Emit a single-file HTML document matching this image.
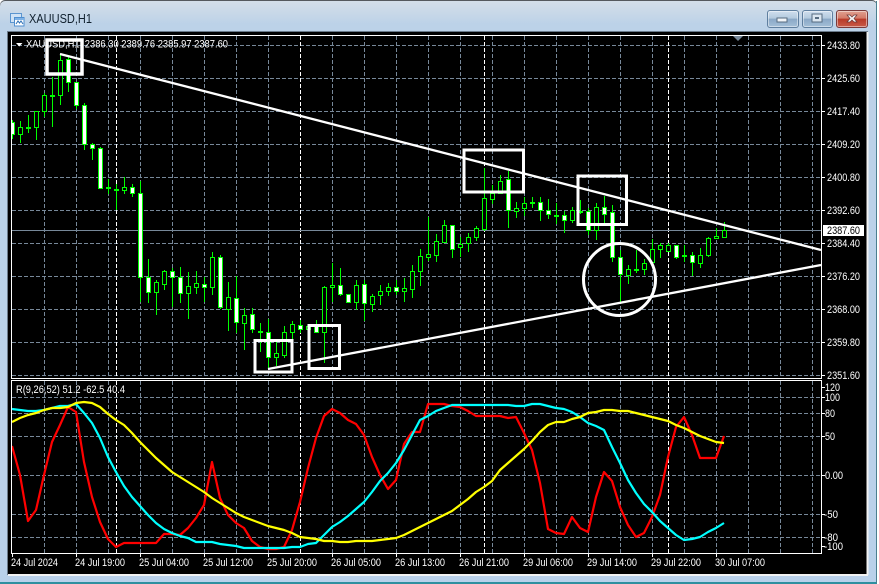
<!DOCTYPE html>
<html><head><meta charset="utf-8"><title>XAUUSD,H1</title>
<style>
html,body{margin:0;padding:0;width:879px;height:584px;overflow:hidden;background:#fff}
#win{position:absolute;left:0;top:0;width:877px;height:583px;background:linear-gradient(180deg,#d5dfe9 0,#bcd2e8 24px,#b9d1ea 100%);border-radius:5px 5px 0 0;box-shadow:inset 0 1px 0 #55595e}
#b1{position:absolute;left:0;top:582px;width:877px;height:2px;background:#2f8f9f}
#r1{position:absolute;left:876px;top:1px;width:1px;height:582px;background:#4a7f90}
.btn{position:absolute;top:10px;height:16px;border:1px solid #5f7f9f;border-radius:3px;box-shadow:inset 0 0 0 1px rgba(255,255,255,.45);background:linear-gradient(180deg,#cfdeee 0,#b4cade 45%,#8aa8c6 50%,#a4bfd8 100%)}
svg{position:absolute;left:0;top:0}
svg text{font-family:"Liberation Sans",sans-serif;font-size:11px;fill:#fff}
</style></head><body>
<div id="win"></div><div id="b1"></div><div id="r1"></div>
<div class="btn" style="left:767px;width:30px"></div>
<div class="btn" style="left:802px;width:29px"></div>
<div class="btn" style="left:836px;width:30px;border-color:#7a3a3a;background:linear-gradient(180deg,#e0a090 0,#d47a68 45%,#b83a28 50%,#c85a48 100%)"></div>
<svg width="879" height="584" viewBox="0 0 879 584" xmlns="http://www.w3.org/2000/svg">
<rect x="777" y="18" width="10" height="4" fill="#f2f5f8" stroke="#566b80" stroke-width="1"/>
<rect x="812" y="14" width="10" height="8" fill="#dbe6f0" stroke="#566b80" stroke-width="1"/><rect x="815" y="17" width="4" height="2" fill="#566b80"/>
<path d="M847 15l3 0 2 2 2-2 3 0-3 3.500 3 3.500-3 0-2-2-2 2-3 0 3-3.500z" fill="#f4f4f4" stroke="#6b3a3a" stroke-width=".7"/>
<rect x="10.500" y="13.500" width="11" height="9" fill="#cfe2f5" stroke="#5b95cf"/>
<rect x="14.500" y="17.500" width="9.500" height="8.500" fill="#fff" stroke="#4f8fd0"/>
<rect x="15" y="18" width="9" height="2" fill="#7eb2e6"/>
<path d="M16 24l2-3 1.500 2 1.500-2 2 3" fill="none" stroke="#2c6fb5" stroke-width="1"/>
<text x="29" y="23" textLength="63" lengthAdjust="spacingAndGlyphs" style="font-size:12.500px;fill:#10202e">XAUUSD,H1</text>
<rect x="7.500" y="31.500" width="860" height="543" fill="#000" stroke="#6b7b8b"/>
<path d="M8 575H868M867.500 32V575" stroke="#f2f2f2" stroke-width="2" fill="none"/>

<g shape-rendering="crispEdges" fill="none" stroke="#778899" stroke-dasharray="4 2">
<path d="M12 45.500H821M12 78.500H821M12 111.500H821M12 144.500H821M12 177.500H821M12 210.500H821M12 243.500H821M12 276.500H821M12 309.500H821M12 342.500H821M12 375.500H821"/>
<path d="M12 397.500H821M12 413.500H821M12 436.500H821M12 475.500H821M12 514.500H821M12 537.500H821"/>
<path d="M44.500 36V378M76.500 36V378M108.500 36V378M140.500 36V378M172.500 36V378M204.500 36V378M236.500 36V378M268.500 36V378M332.500 36V378M364.500 36V378M396.500 36V378M428.500 36V378M460.500 36V378M492.500 36V378M524.500 36V378M556.500 36V378M588.500 36V378M620.500 36V378M652.500 36V378M684.500 36V378M716.500 36V378M748.500 36V378M780.500 36V378M812.500 36V378"/>
<path d="M44.500 381V553M76.500 381V553M108.500 381V553M140.500 381V553M172.500 381V553M204.500 381V553M236.500 381V553M268.500 381V553M332.500 381V553M364.500 381V553M396.500 381V553M428.500 381V553M460.500 381V553M492.500 381V553M524.500 381V553M556.500 381V553M588.500 381V553M620.500 381V553M652.500 381V553M684.500 381V553M716.500 381V553M748.500 381V553M780.500 381V553M812.500 381V553"/>
</g>
<g shape-rendering="crispEdges" fill="none" stroke="#fff" stroke-dasharray="4 2">
<path d="M116.500 36V378M300.500 36V378M484.500 36V378M668.500 36V378M116.500 381V553M300.500 381V553M484.500 381V553M668.500 381V553"/>
</g>
<path shape-rendering="crispEdges" d="M12 230.500H821" stroke="#778899" fill="none"/>

<g shape-rendering="crispEdges">
<path fill="none" stroke="#00ff00" d="M12.500 120V139M20.500 121V143M28.500 115V133M36.500 111V140M44.500 93V117M52.500 77V127M60.500 55V105M68.500 57V92M76.500 82V109M84.500 103V150M92.500 143V160M100.500 147V188M108.500 179V194M116.500 184V210M124.500 177V194M132.500 184V197M140.500 181V302M148.500 259V303M156.500 280V315M164.500 270V290M172.500 268V307M180.500 267V303M188.500 272V319M196.500 271V294M204.500 277V302M212.500 252V295M220.500 255V309M228.500 282V331M236.500 276V333M244.500 308V350M252.500 308V333M260.500 323V352M268.500 319V369M276.500 342V366M284.500 326V358M292.500 321V340M300.500 320V333M308.500 325V331M316.500 320V333M324.500 286V363M332.500 263V302M340.500 268V296M348.500 294V302M356.500 280V310M364.500 280V321M372.500 294V312M380.500 285V305M388.500 283V296M396.500 280V295M404.500 278V302M412.500 265V298M420.500 249V286M428.500 217V261M436.500 234V262M444.500 220V243M452.500 225V258M460.500 237V257M468.500 233V252M476.500 226V241M484.500 168V231M492.500 185V204M500.500 175V193M508.500 171V228M516.500 202V218M524.500 197V216M532.500 197V208M540.500 197V221M548.500 199V219M556.500 203V224M564.500 211V233M572.500 207V223M580.500 200V214M588.500 208V235M596.500 203V240M604.500 196V223M612.500 205V262M620.500 250V302M628.500 265V284M636.500 250V273M644.500 259V275M652.500 239V262M660.500 243V258M668.500 243V252M676.500 245V259M684.500 245V262M692.500 252V276M700.500 248V268M708.500 237V257M716.500 228V239M724.500 222V237"/>
<path fill="#fff" stroke="#00ff00" d="M11.500 122.500h3V134.500h-3zM66.500 59.500h4V82.500h-4zM74.500 82.500h4V105.500h-4zM82.500 105.500h4V144.500h-4zM90.500 144.500h4V148.500h-4zM98.500 148.500h4V188.500h-4zM130.500 187.500h4V193.500h-4zM138.500 193.500h4V277.500h-4zM146.500 277.500h4V292.500h-4zM170.500 271.500h4V277.500h-4zM178.500 277.500h4V293.500h-4zM202.500 284.500h4V287.500h-4zM218.500 257.500h4V307.500h-4zM234.500 298.500h4V322.500h-4zM250.500 314.500h4V329.500h-4zM266.500 332.500h4V357.500h-4zM298.500 325.500h4V329.500h-4zM314.500 326.500h4V332.500h-4zM338.500 285.500h4V294.500h-4zM346.500 294.500h4V302.500h-4zM362.500 284.500h4V303.500h-4zM394.500 287.500h4V291.500h-4zM450.500 225.500h4V249.500h-4zM506.500 179.500h4V210.500h-4zM538.500 202.500h4V210.500h-4zM546.500 210.500h4V214.500h-4zM562.500 215.500h4V220.500h-4zM586.500 211.500h4V230.500h-4zM602.500 207.500h4V214.500h-4zM610.500 212.500h4V257.500h-4zM618.500 257.500h4V274.500h-4zM674.500 245.500h4V257.500h-4zM690.500 255.500h4V262.500h-4z"/>
<path fill="#000" stroke="#00ff00" d="M18.500 127.500h4V134.500h-4zM26.500 127.500h4V128.500h-4zM34.500 111.500h4V127.500h-4zM42.500 95.500h4V111.500h-4zM50.500 95.500h4V96.500h-4zM58.500 60.500h4V95.500h-4zM106.500 187.500h4V188.500h-4zM114.500 189.500h4V190.500h-4zM122.500 187.500h4V190.500h-4zM154.500 282.500h4V292.500h-4zM162.500 271.500h4V284.500h-4zM186.500 286.500h4V293.500h-4zM194.500 283.500h4V287.500h-4zM210.500 257.500h4V287.500h-4zM226.500 297.500h4V309.500h-4zM242.500 315.500h4V323.500h-4zM258.500 331.500h4V332.500h-4zM274.500 353.500h4V357.500h-4zM282.500 332.500h4V355.500h-4zM290.500 324.500h4V332.500h-4zM306.500 326.500h4V329.500h-4zM322.500 287.500h4V332.500h-4zM330.500 285.500h4V287.500h-4zM354.500 285.500h4V302.500h-4zM370.500 296.500h4V304.500h-4zM378.500 291.500h4V295.500h-4zM386.500 287.500h4V291.500h-4zM402.500 288.500h4V291.500h-4zM410.500 271.500h4V289.500h-4zM418.500 256.500h4V271.500h-4zM426.500 254.500h4V257.500h-4zM434.500 241.500h4V255.500h-4zM442.500 225.500h4V242.500h-4zM458.500 244.500h4V247.500h-4zM466.500 237.500h4V243.500h-4zM474.500 228.500h4V237.500h-4zM482.500 198.500h4V229.500h-4zM490.500 193.500h4V199.500h-4zM498.500 181.500h4V193.500h-4zM514.500 208.500h4V211.500h-4zM522.500 203.500h4V208.500h-4zM530.500 202.500h4V203.500h-4zM554.500 215.500h4V216.500h-4zM570.500 210.500h4V220.500h-4zM578.500 211.500h4V212.500h-4zM594.500 207.500h4V230.500h-4zM626.500 269.500h4V275.500h-4zM634.500 269.500h4V270.500h-4zM642.500 263.500h4V269.500h-4zM650.500 249.500h4V262.500h-4zM658.500 245.500h4V249.500h-4zM666.500 245.500h4V251.500h-4zM682.500 255.500h4V256.500h-4zM698.500 255.500h4V263.500h-4zM706.500 238.500h4V255.500h-4zM714.500 236.500h4V238.500h-4zM722.500 230.500h4V237.500h-4z"/>
</g>

<g fill="none" stroke-width="2.200" stroke-linejoin="round">
<polyline stroke="#ff0000" points="12,446 20,475 28,521 36,510 44,475 52,442 60,425 68,407 76,412 84,462 92,497 100,522 108,539 116,547 124,543 132,543 140,543 148,543 156,543 164,534 172,534 180,535 188,528 196,518 204,505 212,462 220,498 228,515 236,523 244,528 252,541 260,547 268,549 276,549 284,547 292,530 300,502 308,468 316,438 324,416 332,409 340,413 348,420 356,424 364,435 372,457 380,475 388,489 396,480 404,444 412,432 420,432 428,404 436,404 444,404 452,406 460,407 468,411 476,416 484,416 492,416 500,416 508,418 516,417 524,433 532,450 540,483 548,529 556,533 564,534 572,517 580,528 588,532 596,497 604,472 612,481 620,507 628,525 636,537 644,533 652,517 660,495 668,457 676,427 684,417 692,435 700,458 708,458 716,458 724,436"/>
<polyline stroke="#00ffff" points="12,409 20,410 28,411 36,411 44,410 52,408 60,406 68,406 76,404 84,413 92,423 100,438 108,457 116,472 124,486 132,497 140,506 148,515 156,523 164,529 172,533 180,536 188,538 196,542 204,542 212,542 220,544 228,545 236,546 244,548 252,548 260,548 268,548 276,548 284,548 292,547 300,547 308,544 316,543 324,535 332,527 340,522 348,516 356,509 364,502 372,492 380,481 388,473 396,463 404,450 412,435 420,420 428,416 436,411 444,408 452,405 460,405 468,405 476,405 484,405 492,405 500,405 508,405 516,406 524,406 532,404 540,404 548,406 556,408 564,409 572,412 580,417 588,423 596,426 604,430 612,447 620,463 628,480 636,493 644,504 652,512 660,521 668,528 676,535 684,540 692,539 700,537 708,532 716,528 724,523"/>
<polyline stroke="#ffff00" points="12,422 20,418 28,415 36,413 44,410 52,408 60,408 68,407 76,403 84,402 92,403 100,407 108,414 116,420 124,425 132,433 140,442 148,450 156,458 164,465 172,472 180,477 188,482 196,487 204,492 212,498 220,503 228,508 236,513 244,517 252,520 260,523 268,526 276,528 284,530 292,533 300,537 308,538 316,539 324,541 332,541 340,542 348,542 356,541 364,541 372,541 380,540 388,539 396,538 404,535 412,531 420,527 428,523 436,519 444,515 452,511 460,505 468,499 476,492 484,487 492,481 500,470 508,463 516,456 524,449 532,441 540,432 548,425 556,422 564,422 572,419 580,417 588,413 596,412 604,410 612,410 620,411 628,411 636,413 644,415 652,417 660,419 668,421 676,425 684,428 692,432 700,436 708,439 716,442 724,443"/>
</g>

<g shape-rendering="crispEdges" fill="none" stroke="#fff">
<path d="M11.500 35.500H821.500V378.500H11.500Z"/>
<path d="M11.500 380.500H821.500V553.500H11.500Z"/>
<path d="M822 45.500h3M822 78.500h3M822 111.500h3M822 144.500h3M822 177.500h3M822 210.500h3M822 243.500h3M822 276.500h3M822 309.500h3M822 342.500h3M822 375.500h3M822 387.500h3M822 397.500h3M822 413.500h3M822 436.500h3M822 475.500h3M822 514.500h3M822 537.500h3M822 546.500h3"/>
<path d="M12.500 554v3M76.500 554v3M140.500 554v3M204.500 554v3M268.500 554v3M332.500 554v3M396.500 554v3M460.500 554v3M524.500 554v3M588.500 554v3M652.500 554v3M716.500 554v3"/>
</g>
<path d="M733 36h10l-5 5z" fill="#778899"/>
<path d="M16 43h6.500l-3.200 3.500z" fill="#fff"/>

<text x="26" y="47.500" textLength="202" lengthAdjust="spacingAndGlyphs" xml:space="preserve">XAUUSD,H1  2386.30 2389.76 2385.97 2387.60</text>
<text x="16" y="393" textLength="109" lengthAdjust="spacingAndGlyphs">R(9,26,52) 51.2 -62.5 40.4</text>

<g>
<text x="827" y="49" textLength="33" lengthAdjust="spacingAndGlyphs">2433.80</text>
<text x="827" y="82" textLength="33" lengthAdjust="spacingAndGlyphs">2425.60</text>
<text x="827" y="115" textLength="33" lengthAdjust="spacingAndGlyphs">2417.40</text>
<text x="827" y="148" textLength="33" lengthAdjust="spacingAndGlyphs">2409.20</text>
<text x="827" y="181" textLength="33" lengthAdjust="spacingAndGlyphs">2400.80</text>
<text x="827" y="214" textLength="33" lengthAdjust="spacingAndGlyphs">2392.60</text>
<text x="827" y="247" textLength="33" lengthAdjust="spacingAndGlyphs">2384.40</text>
<text x="827" y="280" textLength="33" lengthAdjust="spacingAndGlyphs">2376.20</text>
<text x="827" y="313" textLength="33" lengthAdjust="spacingAndGlyphs">2368.00</text>
<text x="827" y="346" textLength="33" lengthAdjust="spacingAndGlyphs">2359.80</text>
<text x="827" y="379" textLength="33" lengthAdjust="spacingAndGlyphs">2351.60</text>
</g>
<rect x="823" y="225" width="41" height="11" fill="#fff"/>
<text x="827" y="234" textLength="33" lengthAdjust="spacingAndGlyphs" style="fill:#000">2387.60</text>
<text x="825" y="391" textLength="15" lengthAdjust="spacingAndGlyphs">120</text>
<text x="825" y="401" textLength="15" lengthAdjust="spacingAndGlyphs">100</text>
<text x="825" y="417" textLength="10" lengthAdjust="spacingAndGlyphs">80</text>
<text x="825" y="440" textLength="10" lengthAdjust="spacingAndGlyphs">50</text>
<text x="825" y="479" textLength="18" lengthAdjust="spacingAndGlyphs">0.00</text>
<text x="824" y="518" textLength="14" lengthAdjust="spacingAndGlyphs">-50</text>
<text x="824" y="541" textLength="14" lengthAdjust="spacingAndGlyphs">-80</text>
<text x="824" y="550" textLength="19" lengthAdjust="spacingAndGlyphs">-100</text>

<g>
<text x="11" y="566" textLength="47" lengthAdjust="spacingAndGlyphs">24 Jul 2024</text>
<text x="75" y="566" textLength="50" lengthAdjust="spacingAndGlyphs">24 Jul 19:00</text>
<text x="139" y="566" textLength="50" lengthAdjust="spacingAndGlyphs">25 Jul 04:00</text>
<text x="203" y="566" textLength="50" lengthAdjust="spacingAndGlyphs">25 Jul 12:00</text>
<text x="267" y="566" textLength="50" lengthAdjust="spacingAndGlyphs">25 Jul 20:00</text>
<text x="331" y="566" textLength="50" lengthAdjust="spacingAndGlyphs">26 Jul 05:00</text>
<text x="395" y="566" textLength="50" lengthAdjust="spacingAndGlyphs">26 Jul 13:00</text>
<text x="459" y="566" textLength="50" lengthAdjust="spacingAndGlyphs">26 Jul 21:00</text>
<text x="523" y="566" textLength="50" lengthAdjust="spacingAndGlyphs">29 Jul 06:00</text>
<text x="587" y="566" textLength="50" lengthAdjust="spacingAndGlyphs">29 Jul 14:00</text>
<text x="651" y="566" textLength="50" lengthAdjust="spacingAndGlyphs">29 Jul 22:00</text>
<text x="715" y="566" textLength="50" lengthAdjust="spacingAndGlyphs">30 Jul 07:00</text>
</g>

<g fill="none" stroke="#fff">
<path d="M60 54L821 250" stroke-width="2.300"/>
<path d="M268 369L821 265" stroke-width="2.300"/>
<rect x="47" y="40" width="35" height="34" stroke-width="3.500"/>
<rect x="255" y="340.500" width="37" height="31.500" stroke-width="3"/>
<rect x="309" y="325.500" width="30.500" height="43" stroke-width="3"/>
<rect x="464" y="150" width="59.500" height="42" stroke-width="3"/>
<rect x="578" y="176" width="48.500" height="48.500" stroke-width="3"/>
<ellipse cx="619.500" cy="279.500" rx="36" ry="36" stroke-width="3"/>
</g>
</svg>
</body></html>
